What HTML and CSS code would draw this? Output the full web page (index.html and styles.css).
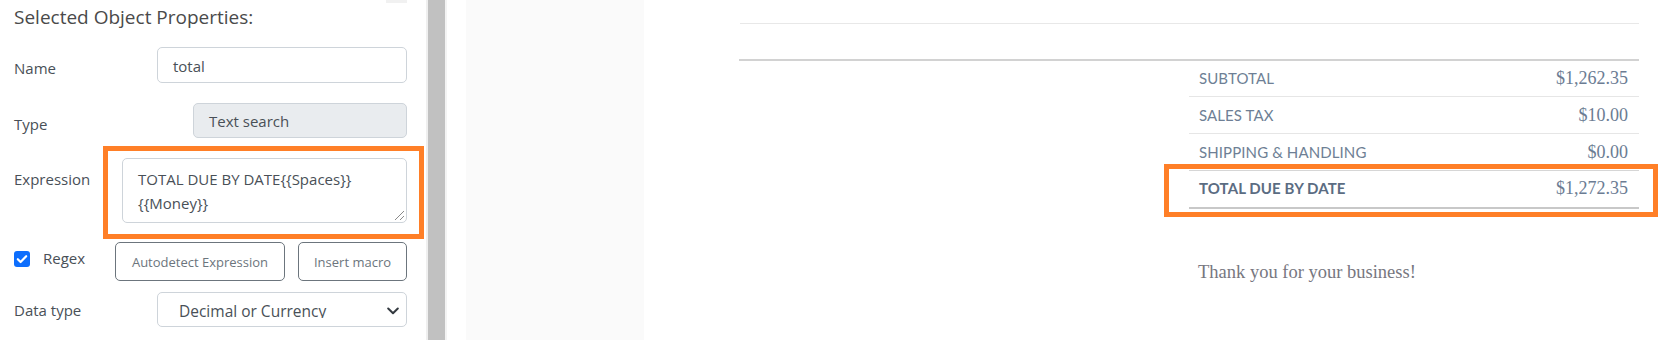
FILE: index.html
```html
<!DOCTYPE html>
<html lang="en">
<head>
<meta charset="utf-8">
<title>Selected Object Properties</title>
<link rel="stylesheet" href="styles.css">
</head>
<body>
<div class="app">
  <aside class="props">
    <div class="stub"></div>
    <h2 class="props-title">Selected Object Properties:</h2>

    <div class="row row-name">
      <label class="lbl lbl-name">Name</label>
      <div class="field field-name">total</div>
    </div>

    <div class="row row-type">
      <label class="lbl lbl-type">Type</label>
      <div class="field field-type">Text search</div>
    </div>

    <div class="row row-expr">
      <label class="lbl lbl-expr">Expression</label>
      <div class="field field-expr">TOTAL DUE BY DATE{{Spaces}}<br>{{Money}}<svg class="grip" width="12" height="12" viewBox="0 0 12 12"><path d="M11 2 L2 11 M11 7 L7 11" stroke="#8a8a8a" stroke-width="1" fill="none"/></svg></div>
    </div>

    <div class="row row-regex">
      <span class="check"><svg width="16" height="16" viewBox="0 0 16 16"><path d="M3.8 8.2 L6.6 11 L12.2 5.2" stroke="#fff" stroke-width="2.2" fill="none" stroke-linecap="round" stroke-linejoin="round"/></svg></span>
      <span class="regex-lbl">Regex</span>
      <button class="btn btn-auto">Autodetect Expression</button>
      <button class="btn btn-macro">Insert macro</button>
    </div>

    <div class="row row-dtype">
      <label class="lbl lbl-dtype">Data type</label>
      <div class="field field-select">
        <span class="select-value">Decimal or Currency</span>
        <svg class="chev" width="12" height="8" viewBox="0 0 12 8"><path d="M1.2 1.5 L6 6.2 L10.8 1.5" stroke="#343a40" stroke-width="2" fill="none" stroke-linecap="round" stroke-linejoin="round"/></svg>
      </div>
    </div>
  </aside>

  <div class="splitter"></div>
  <div class="gutter"></div>
  <div class="margin-col"></div>

  <main class="doc">
    <div class="rule rule-light"></div>
    <div class="rule rule-dark"></div>
    <div class="summary">
      <div class="totals">
        <div class="trow trow-first"><span class="tlabel">SUBTOTAL</span><span class="amt">$1,262.35</span></div>
        <div class="trow"><span class="tlabel">SALES TAX</span><span class="amt">$10.00</span></div>
        <div class="trow trow-pre"><span class="tlabel">SHIPPING &amp; HANDLING</span><span class="amt">$0.00</span></div>
        <div class="trow trow-total"><span class="tlabel tlabel-bold">TOTAL DUE BY DATE</span><span class="amt">$1,272.35</span></div>
      </div>
      <p class="thanks">Thank you for your business!</p>
    </div>
  </main>
</div>
<div class="hl hl-left"></div>
<div class="hl hl-right"></div>
</body>
</html>
```

FILE: styles.css
```css
* { box-sizing: border-box; }
html, body { margin: 0; padding: 0; background: #fff; }
body { position: relative; width: 1664px; height: 340px; overflow: hidden; }

.app {
  display: flex;
  height: 340px;
  overflow: hidden;
}

/* Left property panel */
.props {
  flex: none;
  width: 426px;
  padding: 0 19px 0 14px;
  font-family: "Open Sans", "Noto Sans", sans-serif;
  color: #495057;
  background: #fff;
}
.stub {
  width: 21px;
  height: 3px;
  margin-left: auto;
  background: #f1f1f1;
}
.props-title {
  margin: 0;
  font-size: 19px;
  font-weight: 400;
  line-height: 28px;
  color: #4a4a4a;
}

.row { display: flex; align-items: flex-start; }
.row-name { margin-top: 16px; }
.row-type { margin-top: 20px; }
.row-expr { margin-top: 20px; }
.row-regex { margin-top: 19px; align-items: center; height: 39px; }
.row-dtype { margin-top: 11px; }

.lbl {
  flex: none;
  font-size: 15px;
  line-height: 24px;
  padding-top: 9px;
  color: #495057;
}
.lbl-name { width: 143px; }
.lbl-type { width: 179px; }
.lbl-expr { width: 108px; }
.lbl-dtype { width: 143px; padding-top: 6px; }

.field {
  flex: 1;
  border: 1px solid #ced4da;
  border-radius: 5px;
  font-size: 15px;
  line-height: 24px;
  color: #495057;
  background: #fff;
  padding: 0 15px;
}
.field-name { height: 36px; padding-top: 6px; }
.field-type { height: 35px; padding-top: 5px; background: #e9ecef; }
.field-expr {
  position: relative;
  height: 65px;
  padding-top: 8px;
}
.grip { position: absolute; right: 1px; bottom: 1px; }

.field-select {
  height: 35px;
  display: flex;
  align-items: flex-start;
  padding: 6px 7px 0 21px;
}
.select-value {
  flex: 1;
  display: block;
  height: 19px;
  overflow: hidden;
  line-height: 24px;
  font-size: 15.5px;
  color: #495057;
}
.chev { flex: none; margin-top: 8px; }

.check {
  flex: none;
  width: 16px;
  height: 16px;
  border-radius: 3px;
  background: #0d6efd;
  display: flex;
  margin-top: -5px;
}
.regex-lbl {
  flex: none;
  width: 72px;
  margin-left: 13px;
  font-size: 15px;
  line-height: 24px;
  margin-top: -8px;
  color: #495057;
}
.btn {
  flex: none;
  height: 39px;
  border: 1px solid #6c757d;
  border-radius: 5px;
  background: #fff;
  color: #6c757d;
  font-family: "Open Sans", "Noto Sans", sans-serif;
  font-size: 13px;
  padding: 0;
}
.btn-auto { width: 170px; }
.btn-macro { width: 109px; margin-left: 13px; }

/* Splitter and margins */
.splitter {
  flex: none;
  width: 21px;
  background: #c1c1c1;
  border-left: 2px solid #efefef;
  border-right: 2px solid #f3f3f3;
}
.gutter { flex: none; width: 19px; background: #fff; }
.margin-col { flex: none; width: 178px; background: #fafafa; }

/* Document */
.doc {
  flex: 1;
  padding: 23px 25px 0 95px;
  background: #fff;
}
.rule-light { height: 1px; background: #e8e8e8; margin-left: 1px; }
.rule-dark { height: 2px; background: #d2d2d2; margin-top: 35px; }

.summary { width: 450px; margin-left: auto; }
.trow {
  display: flex;
  justify-content: space-between;
  height: 37px;
  line-height: 36px;
  border-bottom: 1px solid #e6e6e6;
  padding: 0 11px 0 10px;
}
.trow-first { height: 36px; line-height: 34px; }
.trow-pre { border-bottom-color: #d6d6d6; }
.trow-total { height: 38px; border-bottom: 2px solid #c8c8c8; line-height: 35px; }

.tlabel {
  font-family: "Lato", "Open Sans", sans-serif;
  font-size: 15px;
  color: #6e7f95;
  letter-spacing: 0.1px;
}
.tlabel-bold { font-weight: 700; color: #5b6c82; }
.amt {
  font-family: "Liberation Serif", "Times New Roman", serif;
  font-size: 18px;
  color: #6b7c93;
}
.thanks {
  margin: 50px 0 0 0;
  padding-left: 9px;
  font-family: "Liberation Serif", "Times New Roman", serif;
  font-size: 18.5px;
  line-height: 26px;
  color: #77777f;
}

/* Orange annotation highlights */
.hl {
  position: absolute;
  border: 5px solid #ff7f27;
  pointer-events: none;
}
.hl-left { left: 103px; top: 146px; width: 321px; height: 93px; }
.hl-right { left: 1164px; top: 164px; width: 494px; height: 53px; }
```
